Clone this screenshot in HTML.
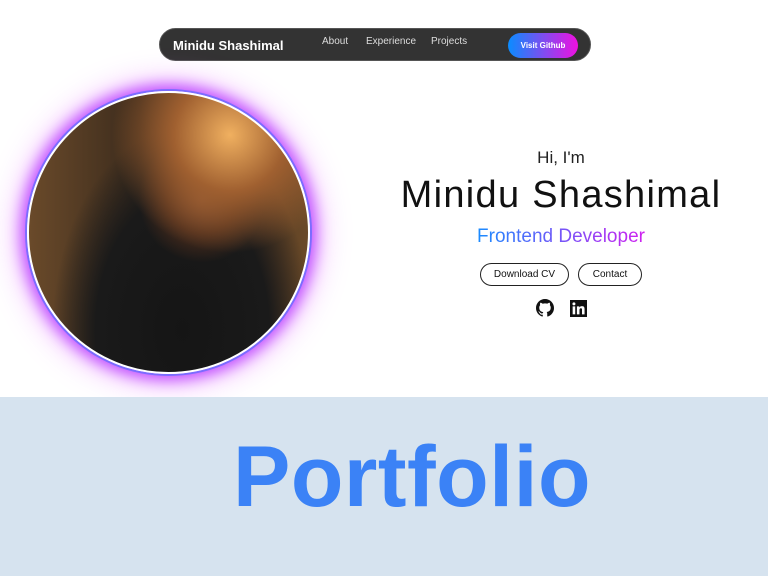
<!DOCTYPE html>
<html><head><style>
*{margin:0;padding:0;box-sizing:border-box}
body{width:768px;height:576px;overflow:hidden;background:#fff;font-family:"Liberation Sans",sans-serif;position:relative}
.nav{position:absolute;left:159px;top:28px;width:432px;height:33px;background:#333;border-radius:17px;border:1px solid #555}
.brand{position:absolute;left:13px;top:9px;color:#fff;font-weight:bold;font-size:13px}
.link{position:absolute;top:7px;color:#ddd;font-size:10px}
.btn{position:absolute;left:348px;top:4px;width:70px;height:25px;border-radius:13px;background:linear-gradient(90deg,#0a8cff,#f010e0);color:#fff;font-size:8px;font-weight:bold;text-align:center;line-height:25px}
.photo{position:absolute;left:27px;top:91px;width:283px;height:283px;border-radius:50%;border:2px solid #fff;
box-shadow:0 0 0 2px #7b6cff,0 0 14px 6px #c050ff,0 0 30px 10px rgba(220,80,255,.4);
background:radial-gradient(circle at 72% 15%,#f0b060 0,#a06030 18%,transparent 38%),radial-gradient(ellipse at 62% 38%,#7a4a30 0,#4a2c1c 14%,transparent 26%),radial-gradient(ellipse at 55% 85%,#151515 0,#1a1a1a 40%,transparent 60%),linear-gradient(90deg,#6a4a2a,#3a2a1c 40%,#4a3020 70%,#6a4a28);overflow:hidden}
.t{position:absolute;left:380px;width:362px;text-align:center}
.ob{position:absolute;top:263px;height:23px;border:1px solid #222;border-radius:12px;font-size:10px;text-align:center;line-height:21px;color:#111}
.bottom{position:absolute;left:0;top:397px;width:768px;height:179px;background:#d6e3ef}
.pf{position:absolute;left:233px;top:428px;font-size:86px;font-weight:900;color:#3b82f6;letter-spacing:0.5px;white-space:nowrap}
</style></head><body>
<div class="nav">
<div class="brand">Minidu Shashimal</div>
<div class="link" style="left:162px">About</div>
<div class="link" style="left:206px">Experience</div>
<div class="link" style="left:271px">Projects</div>
<div class="btn">Visit Github</div>
</div>
<div class="photo"></div>
<div class="t" style="top:148px;font-size:17px;color:#222">Hi, I'm</div>
<div class="t" style="top:174px;font-size:38px;color:#111;letter-spacing:1.3px">Minidu Shashimal</div>
<div class="t" style="top:226px;font-size:19px"><span style="background:linear-gradient(90deg,#1a8cff,#d020f0);-webkit-background-clip:text;color:transparent">Frontend Developer</span></div>
<div class="ob" style="left:480px;width:89px">Download CV</div>
<div class="ob" style="left:578px;width:64px">Contact</div>
<svg style="position:absolute;left:536px;top:299px" width="18" height="18" viewBox="0 0 16 16"><path fill="#111" d="M8 0C3.58 0 0 3.58 0 8c0 3.54 2.29 6.53 5.47 7.59.4.07.55-.17.55-.38v-1.33c-2.23.48-2.7-1.07-2.7-1.07-.36-.93-.89-1.17-.89-1.17-.73-.5.05-.49.05-.49.8.06 1.23.83 1.23.83.72 1.22 1.87.87 2.33.66.07-.52.28-.87.5-1.07-1.78-.2-3.64-.89-3.64-3.95 0-.87.31-1.59.82-2.15-.08-.2-.36-1.02.08-2.12 0 0 .67-.21 2.2.82A7.6 7.6 0 0 1 8 3.86c.68 0 1.36.09 2 .27 1.53-1.04 2.2-.82 2.2-.82.44 1.1.16 1.92.08 2.12.51.56.82 1.27.82 2.15 0 3.07-1.87 3.75-3.65 3.95.29.25.54.73.54 1.48v2.2c0 .21.15.46.55.38A8 8 0 0 0 16 8c0-4.42-3.58-8-8-8z"/></svg>
<svg style="position:absolute;left:570px;top:300px" width="17" height="17" viewBox="0 0 16 16"><rect width="16" height="16" fill="#111"/><rect x="2.5" y="6" width="2.4" height="7.5" fill="#fff"/><circle cx="3.7" cy="3.6" r="1.4" fill="#fff"/><path fill="#fff" d="M6.5 6h2.3v1.1c.4-.7 1.3-1.3 2.5-1.3 2 0 2.4 1.3 2.4 3v4.7h-2.4V9.4c0-1-.1-1.6-1-1.6-1 0-1.4.7-1.4 1.7v4H6.5z"/></svg>
<div class="bottom"></div>
<div class="pf">Portfolio</div>
</body></html>
